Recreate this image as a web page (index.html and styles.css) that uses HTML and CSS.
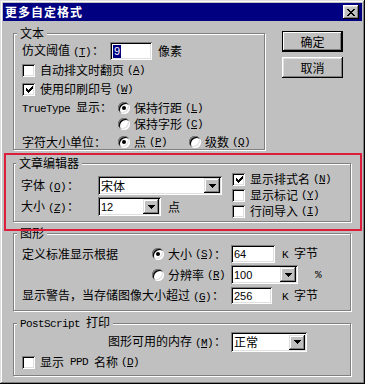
FILE: index.html
```html
<!DOCTYPE html>
<html lang="zh-CN">

<head>
  <meta charset="UTF-8">
  <title>更多自定格式</title>
  <link rel="stylesheet" href="styles.css">
</head>

<body>

  <div class="window">
    <!-- Title bar -->
    <div class="titlebar">
      <h1>更多自定格式</h1>
      <span class="close">
        <svg width="8" height="7" viewBox="0 0 8 7"><path d="M0 0h2v1H0zM6 0h2v1H6zM1 1h2v1H1zM5 1h2v1H5zM2 2h4v1H2zM3 3h2v1H3zM2 4h4v1H2zM1 5h2v1H1zM5 5h2v1H5zM0 6h2v1H0zM6 6h2v1H6z"/></svg>
      </span>
    </div>

    <div class="content">
      <div class="top">
        <!-- 文本 -->
        <fieldset class="group g-text">
          <legend>文本</legend>
          <div class="row t1">
            <span class="lbl w88">仿文阈值<span class="k">(<u>T</u>)</span>：</span>
            <span class="field w42"><span class="sel">9</span></span>
            <span class="unit">像素</span>
          </div>
          <div class="row t2"><span class="cb"></span>自动排文时翻页<span class="k">(<u>A</u>)</span></div>
          <div class="row t3"><span class="cb on"><svg width="7" height="7" viewBox="0 0 7 7"><path d="M6 0h1v1H6zM5 1h2v1H5zM0 2h1v1H0zM4 2h3v1H4zM0 3h2v1H0zM3 3h3v1H3zM0 4h5v1H0zM1 5h3v1H1zM2 6h1v1H2z"/></svg></span>使用印刷印号<span class="k">(<u>W</u>)</span></div>
          <div class="row t4">
            <span class="lbl w96"><span class="en">TrueType</span><span class="sp">显示：</span></span>
            <span class="opt"><span class="rb on"></span>保持行距<span class="k">(<u>L</u>)</span></span>
          </div>
          <div class="row t5">
            <span class="opt pad96"><span class="rb"></span>保持字形<span class="k">(<u>C</u>)</span></span>
          </div>
          <div class="row t6">
            <span class="lbl w96">字符大小单位：</span>
            <span class="opt w71"><span class="rb on"></span>点<span class="k">(<u>P</u>)</span></span>
            <span class="opt"><span class="rb"></span>级数<span class="k">(<u>Q</u>)</span></span>
          </div>
        </fieldset>

        <div class="buttons">
          <button class="btn default">确定</button>
          <button class="btn">取消</button>
        </div>
      </div>

      <!-- 文章编辑器 (highlighted) -->
      <div class="highlight">
        <fieldset class="group g-editor">
          <legend>文章编辑器</legend>
          <div class="editor">
            <div class="editor-left">
              <div class="row e1">
                <span class="lbl w77">字体<span class="k">(<u>O</u>)</span>：</span>
                <span class="combo w124"><span class="val">宋体</span><span class="drop"><svg width="7" height="4" viewBox="0 0 7 4"><path d="M0 0h7v1H0zM1 1h5v1H1zM2 2h3v1H2zM3 3h1v1H3z"/></svg></span></span>
              </div>
              <div class="row e2">
                <span class="lbl w77">大小<span class="k">(<u>Z</u>)</span>：</span>
                <span class="combo w63"><span class="val num">12</span><span class="drop"><svg width="7" height="4" viewBox="0 0 7 4"><path d="M0 0h7v1H0zM1 1h5v1H1zM2 2h3v1H2zM3 3h1v1H3z"/></svg></span></span>
                <span class="unit u7">点</span>
              </div>
            </div>
            <div class="editor-right">
              <div class="row crow"><span class="cb on"><svg width="7" height="7" viewBox="0 0 7 7"><path d="M6 0h1v1H6zM5 1h2v1H5zM0 2h1v1H0zM4 2h3v1H4zM0 3h2v1H0zM3 3h3v1H3zM0 4h5v1H0zM1 5h3v1H1zM2 6h1v1H2z"/></svg></span>显示排式名<span class="k">(<u>N</u>)</span></div>
              <div class="row crow"><span class="cb"></span>显示标记<span class="k">(<u>Y</u>)</span></div>
              <div class="row crow"><span class="cb"></span>行间导入<span class="k">(<u>I</u>)</span></div>
            </div>
          </div>
        </fieldset>
      </div>

      <!-- 图形 -->
      <fieldset class="group g-graphic">
        <legend>图形</legend>
        <div class="row p1">
          <span class="lbl w130">定义标准显示根据</span>
          <span class="opt w79"><span class="rb on"></span>大小<span class="k">(<u>S</u>)</span>：</span>
          <span class="field w44"><span class="val num">64</span></span>
          <span class="unit u7"><span class="en">K</span><span class="sp">字节</span></span>
        </div>
        <div class="row p2">
          <span class="opt w79 pad130"><span class="rb"></span>分辨率<span class="k">(<u>R</u>)</span></span>
          <span class="combo w67"><span class="val num">100</span><span class="drop"><svg width="7" height="4" viewBox="0 0 7 4"><path d="M0 0h7v1H0zM1 1h5v1H1zM2 2h3v1H2zM3 3h1v1H3z"/></svg></span></span>
          <span class="unit u17 en">%</span>
        </div>
        <div class="row p3">
          <span class="lbl w209">显示警告，当存储图像大小超过<span class="k">(<u>G</u>)</span>：</span>
          <span class="field w41"><span class="val num">256</span></span>
          <span class="unit u10"><span class="en">K</span><span class="sp">字节</span></span>
        </div>
      </fieldset>

      <!-- PostScript 打印 -->
      <fieldset class="group g-ps">
        <legend><span class="en">PostScript</span><span class="sp">打印</span></legend>
        <div class="row s1">
          <span class="lbl w123">图形可用的内存<span class="k">(<u>M</u>)</span>：</span>
          <span class="combo w76"><span class="val">正常</span><span class="drop"><svg width="7" height="4" viewBox="0 0 7 4"><path d="M0 0h7v1H0zM1 1h5v1H1zM2 2h3v1H2zM3 3h1v1H3z"/></svg></span></span>
        </div>
        <div class="row s2"><span class="cb"></span>显示<span class="en sp">PPD</span><span class="sp">名称</span><span class="k">(<u>D</u>)</span></div>
      </fieldset>
    </div>
  </div>

</body>

</html>
```

FILE: styles.css
```css
* {
  box-sizing: border-box;
}

body {
  margin: 0;
  background-color: #c0c0c0;
  color: #000;
  font-family: "Noto Sans CJK SC", sans-serif;
  font-size: 12px;
  line-height: 14px;
}

/* Window frame */
.window {
  width: 365px;
  height: 384px;
  padding: 3px;
  background-color: #c0c0c0;
  box-shadow: inset -1px -1px #000, inset 1px 1px #dfdfdf,
    inset -2px -2px #808080, inset 2px 2px #fff;
}

.titlebar {
  height: 18px;
  background-color: #000080;
  color: #fff;
  display: flex;
  align-items: center;
  justify-content: space-between;
  padding: 0 3px 0 2px;
}

.titlebar h1 {
  margin: 0;
  font-size: 12px;
  font-weight: bold;
  letter-spacing: 1px;
}

.close {
  width: 16px;
  height: 14px;
  background-color: #c0c0c0;
  display: flex;
  align-items: center;
  justify-content: center;
  box-shadow: inset -1px -1px #000, inset 1px 1px #fff,
    inset -2px -2px #808080, inset 2px 2px #dfdfdf;
}

.close svg {
  display: block;
  margin-left: -1px;
}

/* Content */
.content {
  padding: 5px 0 0 10px;
}

.top {
  display: flex;
  align-items: flex-start;
}

/* Group boxes */
.group {
  margin: 0;
  padding: 0 0 0 8px;
  min-width: 0;
  border: 1px solid #808080;
  box-shadow: inset 1px 1px #fff, 1px 1px #fff;
}

.group legend {
  margin-left: -5px;
  padding: 0 3px;
  background-color: #c0c0c0;
  line-height: 14px;
}

.g-text {
  width: 252px;
  padding-bottom: 0;
}

.g-editor {
  width: 338px;
  padding-left: 7px;
}

.g-graphic {
  width: 338px;
  margin-top: -5px;
  padding-bottom: 6px;
}

.g-ps {
  width: 338px;
  margin-top: 4px;
  padding-bottom: 6px;
}

/* Rows */
.row {
  display: flex;
  align-items: center;
  height: 14px;
  white-space: nowrap;
}

.t1 { height: 18px; margin-top: 2px; }
.t2 { margin-top: 3px; }
.t3 { margin-top: 5px; }
.t4 { margin-top: 5px; }
.t5 { margin-top: 2px; }
.t6 { margin-top: 3px; height: 15px; }

.lbl { flex: none; }
.w77 { width: 77px; }
.w88 { width: 88px; }
.w96 { width: 96px; }
.w123 { width: 123px; }
.w130 { width: 130px; }
.w209 { width: 209px; }

.opt {
  display: flex;
  align-items: center;
  flex: none;
}

.w71 { width: 71px; }
.w79 { width: 79px; }
.pad96 { margin-left: 96px; }
.pad130 { margin-left: 130px; }

.unit { margin-left: 6px; }
.u7 { margin-left: 7px; }
.u10 { margin-left: 10px; }
.u17 { margin-left: 17px; }

.sp { margin-left: 6px; }

/* Latin text in the small fixed font */
.en,
.k {
  font-family: "Liberation Mono", monospace;
  font-size: 11px;
  letter-spacing: -0.6px;
}

.k {
  margin-left: 3px;
  margin-right: 1px;
}

.k u {
  text-decoration-thickness: 1px;
  text-underline-offset: 1px;
}

/* Controls */
.field,
.combo {
  display: flex;
  align-items: center;
  flex: none;
  background-color: #fff;
  padding: 0 2px 0 3px;
  box-shadow: inset 1px 1px #808080, inset -1px -1px #fff,
    inset 2px 2px #000, inset -2px -2px #dfdfdf;
}

.field { height: 18px; }
.combo { height: 19px; justify-content: space-between; }

.w41 { width: 41px; }
.w42 { width: 42px; }
.w44 { width: 44px; }
.w63 { width: 63px; }
.w67 { width: 67px; }
.w76 { width: 76px; }
.w124 { width: 124px; }

.p3 .field { height: 17px; }

.num {
  font-family: "Liberation Sans", sans-serif;
  font-size: 11px;
}

.sel {
  background-color: #000080;
  color: #fff;
  font-family: "Liberation Sans", sans-serif;
  font-size: 11px;
  padding: 0 1px;
  line-height: 13px;
}

.drop {
  width: 16px;
  height: 15px;
  background-color: #c0c0c0;
  display: flex;
  align-items: center;
  justify-content: center;
  box-shadow: inset -1px -1px #000, inset 1px 1px #dfdfdf,
    inset -2px -2px #808080, inset 2px 2px #fff;
}

.drop svg {
  display: block;
}

.cb {
  width: 13px;
  height: 13px;
  flex: none;
  margin-right: 5px;
  background-color: #fff;
  display: flex;
  align-items: center;
  justify-content: center;
  box-shadow: inset 1px 1px #808080, inset -1px -1px #fff,
    inset 2px 2px #000, inset -2px -2px #dfdfdf;
}

.cb svg {
  display: block;
  margin: 1px 0 0 1px;
}

.rb {
  width: 12px;
  height: 12px;
  flex: none;
  margin-right: 4px;
  border-radius: 50%;
  background-color: #fff;
  position: relative;
  box-shadow: inset 1px 1px #808080, inset -1px -1px #fff,
    inset 2px 2px #000, inset -2px -2px #dfdfdf;
}

.rb.on::after {
  content: "";
  position: absolute;
  left: 4px;
  top: 4px;
  width: 4px;
  height: 4px;
  border-radius: 50%;
  background-color: #000;
}

/* Buttons */
.buttons {
  display: flex;
  flex-direction: column;
  gap: 5px;
  margin: 5px 0 0 17px;
}

.btn {
  width: 61px;
  height: 21px;
  padding: 0;
  border: none;
  background-color: #c0c0c0;
  font-family: "Noto Sans CJK SC", sans-serif;
  font-size: 12px;
  color: #000;
  box-shadow: inset -1px -1px #000, inset 1px 1px #fff,
    inset -2px -2px #808080, inset 2px 2px #dfdfdf;
}

.btn.default {
  box-shadow: inset 0 0 0 1px #000, inset -2px -2px #000,
    inset 2px 2px #fff, inset -3px -3px #808080;
}

/* Red highlight around the editor group */
.highlight {
  position: relative;
  z-index: 1;
  width: 358px;
  height: 78px;
  margin: 3px 0 0 -9px;
  padding: 1px 0 0 7px;
  border: 2px solid #dc1e3c;
}

.highlight .group {
  position: relative;
  z-index: -1;
}

.editor {
  display: flex;
}

.editor-left {
  width: 211px;
  padding-bottom: 5px;
}

.e1 { height: 19px; margin-top: 6px; }
.e2 { height: 19px; margin-top: 2px; }

.editor-right {
  margin-top: 1px;
}

.crow { height: 16px; }

/* 图形 rows */
.p1 { height: 18px; margin-top: 5px; }
.p2 { height: 19px; margin-top: 2px; }
.p3 { height: 17px; margin-top: 3px; }

/* PostScript rows */
.s1 { height: 20px; margin-top: 1px; }
.s1 .lbl { margin-left: 86px; }
.s1 .combo { height: 20px; }
.s2 { margin-top: 3px; }
```
